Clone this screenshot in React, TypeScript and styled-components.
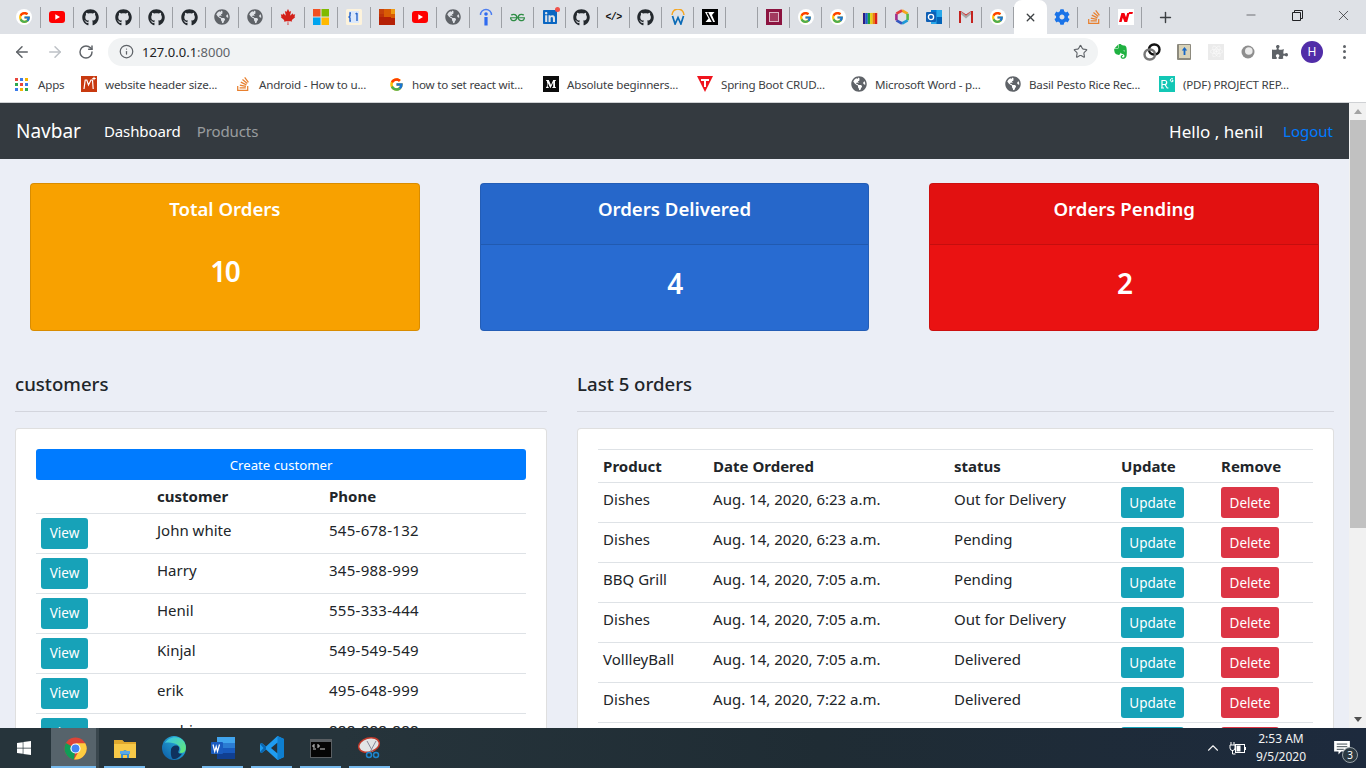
import React from "react";
import styled, { createGlobalStyle } from "styled-components";
import { FcGoogle } from "react-icons/fc";
import {
  FaGithub,
  FaGlobeAmericas,
  FaCanadianMapleLeaf,
  FaLinkedin,
  FaCog,
  FaStackOverflow,
  FaEvernote,
  FaWindows,
  FaPuzzlePiece,
  FaReact,
} from "react-icons/fa";
import { SiGeeksforgeeks } from "react-icons/si";
import { ArrowLeft, ArrowRight, RotateCw, Star, Info, Plus, X, Minus, ChevronUp } from "lucide-react";

const UI = `"Noto Sans", "Open Sans", Arial, sans-serif`;

const Global = createGlobalStyle`
  html, body { margin: 0; padding: 0; height: 100%; overflow: hidden; background: #fff; }
  * { box-sizing: border-box; }
  body { font-family: ${UI}; color: #212529; }
`;

const Shell = styled.div`
  width: 1366px;
  height: 768px;
  display: flex;
  flex-direction: column;
  overflow: hidden;
`;

/* ---------- tab strip ---------- */
const TabStrip = styled.div`
  height: 34px;
  flex: none;
  display: flex;
  align-items: stretch;
  padding-left: 8px;
  background: #dee1e6;
`;
const Tab = styled.div<{ $w?: number }>`
  width: ${(p) => p.$w ?? 33}px;
  flex: none;
  display: flex;
  align-items: center;
  justify-content: center;
  position: relative;
  border-right: 1px solid #9da0a5;
  border-image: linear-gradient(to bottom, transparent 8px, #9da0a5 8px, #9da0a5 27px, transparent 27px) 1;
`;
const LinkedInWrap = styled.span`
  position: relative;
  display: flex;
  &::after {
    content: "";
    position: absolute;
    right: -2px;
    top: -2px;
    width: 5px;
    height: 5px;
    border-radius: 50%;
    background: #f0524a;
  }
`;
const ActiveTab = styled.div`
  width: 33px;
  flex: none;
  background: #fff;
  border-radius: 8px 8px 0 0;
  display: flex;
  align-items: center;
  justify-content: center;
  color: #3c4043;
`;
const GoogleDisc = styled.span`
  width: 16px;
  height: 16px;
  border-radius: 50%;
  background: #fff;
  display: flex;
  align-items: center;
  justify-content: center;
`;
const NewTab = styled.div`
  margin-left: 6px;
  width: 34px;
  display: flex;
  align-items: center;
  justify-content: center;
  color: #3c4043;
`;
const WindowControls = styled.div`
  margin-left: auto;
  display: flex;
  color: #202124;
`;
const WinButton = styled.div`
  width: 46px;
  height: 30px;
  display: flex;
  align-items: center;
  justify-content: center;
`;
const Code = styled.span`
  font: bold 10px "Liberation Mono", monospace;
  color: #111;
  letter-spacing: -0.6px;
`;

/* ---------- toolbar ---------- */
const Toolbar = styled.div`
  height: 35px;
  flex: none;
  background: #fff;
  display: flex;
  align-items: center;
  padding-left: 6px;
`;
const NavIcon = styled.div<{ $w?: number }>`
  width: ${(p) => p.$w ?? 32}px;
  flex: none;
  display: flex;
  align-items: center;
  justify-content: center;
  color: #5f6368;
`;
const Omnibox = styled.div`
  width: 990px;
  height: 28px;
  margin-left: 7px;
  margin-right: 6px;
  flex: none;
  background: #f1f3f4;
  border-radius: 14px;
  display: flex;
  align-items: center;
  padding-left: 11px;
  padding-right: 10px;
  color: #5f6368;
`;
const Url = styled.span`
  margin-left: 8px;
  font-size: 13px;
  color: #202124;
  b { font-weight: 400; color: #5f6368; }
`;
const StarSlot = styled.div`
  margin-left: auto;
  display: flex;
`;
const Avatar = styled.div`
  width: 22px;
  height: 22px;
  border-radius: 50%;
  background: #512da8;
  color: #fff;
  font-size: 12px;
  display: flex;
  align-items: center;
  justify-content: center;
`;
const Dots = styled.div`
  display: flex;
  flex-direction: column;
  gap: 2.5px;
  i { width: 3px; height: 3px; border-radius: 50%; background: #5f6368; display: block; }
`;
const AtomTile = styled.div`
  width: 16px;
  height: 16px;
  background: #ebebeb;
  display: flex;
  align-items: center;
  justify-content: center;
`;

/* ---------- bookmarks ---------- */
const Bookmarks = styled.div`
  height: 34px;
  flex: none;
  background: #fff;
  border-bottom: 1px solid #cfd1d4;
  display: flex;
  align-items: center;
  padding: 0 0 3px 15px;
  font-size: 11.6px;
  color: #3c4043;
`;
const AppsLink = styled.div`
  width: 66px;
  flex: none;
  display: flex;
  align-items: center;
  gap: 10px;
`;
const AppsGrid = styled.div`
  display: grid;
  grid-template-columns: repeat(3, 3px);
  gap: 2px;
  i { width: 3px; height: 3px; display: block; }
`;
const Bookmark = styled.div`
  width: 154px;
  flex: none;
  display: flex;
  align-items: center;
  gap: 8px;
  white-space: nowrap;
`;
const BmLabel = styled.span`
  letter-spacing: -0.2px;
`;

/* ---------- page ---------- */
const Viewport = styled.div`
  flex: 1;
  min-height: 0;
  display: flex;
  overflow: hidden;
`;
const Page = styled.div`
  width: 1349px;
  flex: none;
  background: #ebeef6;
  overflow: hidden;
`;
const Scrollbar = styled.div`
  flex: 1;
  background: #f1f1f1;
  display: flex;
  flex-direction: column;
  align-items: center;
  justify-content: space-between;
  position: relative;
  padding: 6px 0;
`;
const ScrollThumb = styled.div`
  position: absolute;
  left: 1px;
  right: 0;
  top: 17px;
  height: 408px;
  background: #c1c1c1;
`;
const ArrowUp = styled.i`
  width: 0;
  height: 0;
  border-left: 4px solid transparent;
  border-right: 4px solid transparent;
  border-bottom: 5px solid #a3a3a3;
`;
const ArrowDown = styled.i`
  width: 0;
  height: 0;
  border-left: 4px solid transparent;
  border-right: 4px solid transparent;
  border-top: 5px solid #505050;
`;

const Navbar = styled.nav`
  height: 56px;
  background: #343a40;
  display: flex;
  align-items: center;
  padding: 0 16px;
`;
const Brand = styled.span`
  font-size: 19px;
  color: #fff;
  margin-right: 23px;
`;
const NavLink = styled.span<{ $dim?: boolean }>`
  font-size: 15px;
  letter-spacing: -0.1px;
  margin-right: 16px;
  color: ${(p) => (p.$dim ? "rgba(255,255,255,.5)" : "#fff")};
`;
const Hello = styled.span`
  margin-left: auto;
  font-size: 17px;
  color: #fff;
  margin-right: 20px;
`;
const Logout = styled.span`
  font-size: 15px;
  color: #007bff;
`;

const Stats = styled.div`
  display: grid;
  grid-template-columns: repeat(3, 1fr);
  padding-top: 24px;
`;
const StatCol = styled.div`
  padding: 0 30px;
`;
const StatCard = styled.div<{ $bg: string }>`
  height: 148px;
  background: ${(p) => p.$bg};
  border: 1px solid rgba(0, 0, 0, 0.125);
  border-radius: 4px;
  color: #fff;
  text-align: center;
`;
const StatHead = styled.div<{ $rule?: boolean }>`
  height: 61px;
  padding-top: 11px;
  font-size: 18.6px;
  font-weight: 600;
  line-height: 28px;
  ${(p) => p.$rule && "background: rgba(0,0,0,.03); border-bottom: 1px solid rgba(0,0,0,.125);"}
`;
const StatValue = styled.div<{ $offset: number }>`
  padding-top: ${(p) => p.$offset}px;
  font-size: 28px;
  font-weight: 600;
  line-height: 34px;
  letter-spacing: -1.5px;
`;

const Columns = styled.div`
  display: grid;
  grid-template-columns: 5fr 7fr;
  margin-top: 41px;
`;
const Col = styled.section`
  padding: 0 15px;
`;
const Heading = styled.h5`
  margin: 0;
  font-size: 18.6px;
  font-weight: 500;
  line-height: 24px;
`;
const Rule = styled.hr`
  margin: 15px 0 16px;
  border: 0;
  border-top: 1px solid rgba(0, 0, 0, 0.1);
`;
const Panel = styled.div`
  background: #fff;
  border: 1px solid rgba(0, 0, 0, 0.125);
  border-radius: 4px;
  padding: 20px;
`;
const CreateButton = styled.div`
  height: 31px;
  background: #007bff;
  color: #fff;
  font-size: 13.2px;
  border-radius: 3px;
  display: flex;
  align-items: center;
  justify-content: center;
`;
const Table = styled.table`
  width: 100%;
  border-collapse: collapse;
  table-layout: fixed;
  font-size: 15px;
`;
const HeadCell = styled.th<{ $h: number; $top?: boolean }>`
  height: ${(p) => p.$h}px;
  padding: 0 5px;
  text-align: left;
  font-weight: 700;
  font-size: 15px;
  border-bottom: 1px solid #dee2e6;
  ${(p) => p.$top && "border-top: 1px solid #dee2e6;"}
`;
const Cell = styled.td`
  height: 40px;
  padding: 4px 5px 0;
  vertical-align: top;
  line-height: 24px;
  border-bottom: 1px solid #dee2e6;
  white-space: nowrap;
`;
const PhoneCell = styled(Cell)`
  letter-spacing: 0.27px;
`;
const SmallButton = styled.div<{ $bg: string; $w: number }>`
  width: ${(p) => p.$w}px;
  height: 31px;
  background: ${(p) => p.$bg};
  color: #fff;
  border-radius: 3px;
  font-size: 13.5px;
  display: flex;
  align-items: center;
  justify-content: center;
`;

/* ---------- taskbar ---------- */
const Taskbar = styled.div`
  height: 40px;
  flex: none;
  background: linear-gradient(90deg, #26343b 0%, #26343b 25%, #1f2c34 60%, #1d2a3d 100%);
  display: flex;
  align-items: stretch;
  color: #fff;
`;
const StartButton = styled.div`
  width: 51px;
  flex: none;
  display: flex;
  align-items: center;
  justify-content: center;
  padding-right: 3px;
`;
const TaskItem = styled.div<{ $on?: boolean; $active?: boolean }>`
  width: 49px;
  flex: none;
  display: flex;
  align-items: center;
  justify-content: center;
  position: relative;
  background: ${(p) =>
    p.$active ? "linear-gradient(90deg, #56636b 0, #56636b 45px, #39464d 45px, #39464d 48px, transparent 48px)" : "none"};
  &::after {
    content: "";
    position: absolute;
    left: ${(p) => (p.$active ? 0 : 4)}px;
    right: 4px;
    bottom: 0;
    height: 2px;
    background: ${(p) => (p.$on ? "#76b9ed" : "transparent")};
  }
`;
const Tray = styled.div`
  margin-left: auto;
  display: flex;
  align-items: center;
`;
const TrayIcon = styled.div<{ $w: number }>`
  width: ${(p) => p.$w}px;
  display: flex;
  justify-content: center;
`;
const Clock = styled.div`
  width: 64px;
  text-align: center;
  font-size: 12px;
  line-height: 18px;
  color: #f2f2f2;
`;
const Notify = styled.div`
  width: 42px;
  margin-left: 8px;
  margin-right: 3px;
  display: flex;
  justify-content: center;
  position: relative;
`;
const NotifyBadge = styled.span`
  position: absolute;
  left: 21px;
  top: 6px;
  width: 16px;
  height: 16px;
  border-radius: 50%;
  background: #2c3a43;
  border: 1px solid #9aa3a8;
  font-size: 10px;
  display: flex;
  align-items: center;
  justify-content: center;
`;

/* ---------- drawn favicons ---------- */
const YouTube = () => (
  <svg width="16" height="12" viewBox="0 0 16 12"><rect width="16" height="12" rx="3" fill="#f00" /><path d="M6.3 3.2 11 6l-4.7 2.8z" fill="#fff" /></svg>
);
const Microsoft = () => (
  <svg width="16" height="16" viewBox="0 0 16 16"><rect width="7.5" height="7.5" fill="#f25022" /><rect x="8.5" width="7.5" height="7.5" fill="#7fba00" /><rect y="8.5" width="7.5" height="7.5" fill="#00a4ef" /><rect x="8.5" y="8.5" width="7.5" height="7.5" fill="#ffb900" /></svg>
);
const Bracket = () => (
  <svg width="16" height="16" viewBox="0 0 16 16"><rect width="16" height="16" rx="1.5" fill="#fdf3dc" /><rect x="3" y="2" width="10" height="12" fill="#dbe8fb" /><path d="M5 4H4v3L3 8l1 1v3h1M11 4v8M9.5 5 11 4" stroke="#2a66c9" strokeWidth="1.4" fill="none" /></svg>
);
const Mosaic = () => (
  <svg width="16" height="16" viewBox="0 0 16 16"><rect width="16" height="16" fill="#b52106" /><rect width="5" height="5" fill="#c8410b" /><rect x="5" width="7" height="8" fill="#d95c04" /><rect x="12" width="4" height="5" fill="#ee9b13" /><rect x="12" y="5" width="4" height="4" fill="#d95c04" /><rect y="5" width="5" height="3" fill="#bf3309" /></svg>
);
const InfoBlue = () => (
  <svg width="16" height="18" viewBox="0 0 16 18"><path d="M2.5 7a5.5 5.5 0 0 1 11 0" fill="none" stroke="#4d7ef0" strokeWidth="1.4" /><circle cx="8" cy="6" r="1.8" fill="#2f6bf0" /><rect x="6.4" y="9" width="3.2" height="8.5" fill="#2f6bf0" /></svg>
);
const Workday = () => (
  <svg width="16" height="16" viewBox="0 0 16 16"><path d="M2 6a6 6 0 0 1 12 0" fill="none" stroke="#f5a623" strokeWidth="1.5" /><path d="m2.5 7 2.6 8 2.9-6.5 2.9 6.5 2.6-8" fill="none" stroke="#0a6ab6" strokeWidth="1.7" /></svg>
);
const Notion = () => (
  <svg width="16" height="16" viewBox="0 0 16 16"><rect width="16" height="16" fill="#000" /><path d="M3 3h9.5L10 6 13 13H3.5l3-3.5z" fill="#fff" /><path d="M5.5 3.6 10.5 13" stroke="#000" strokeWidth="1.5" /></svg>
);
const Maroon = () => (
  <svg width="16" height="16" viewBox="0 0 16 16"><rect width="16" height="16" fill="#8c1440" /><rect x="3.5" y="3.5" width="9" height="9" fill="#a23a5e" stroke="#dcb4c3" /></svg>
);
const RainbowBook = () => (
  <svg width="16" height="16" viewBox="0 0 16 16"><path d="M0 2 8 4l8-2v13l-8 1-8-1z" fill="#e8e0c8" /><rect x="1" y="4" width="2.4" height="11" fill="#2b1a86" /><rect x="3.4" y="4" width="2.4" height="11" fill="#1a5fd0" /><rect x="5.8" y="4" width="2.4" height="11" fill="#1f9e3c" /><rect x="8.2" y="4" width="2.4" height="11" fill="#e8d010" /><rect x="10.6" y="4" width="2.4" height="11" fill="#ec7a12" /><rect x="13" y="4" width="2.2" height="11" fill="#d91f1f" /></svg>
);
const Hexagon = () => (
  <svg width="16" height="16" viewBox="0 0 16 16" fill="none" strokeWidth="2.6"><path d="M8 1.5 13.6 4.7" stroke="#f4a81c" /><path d="M13.6 4.7v6.6" stroke="#57b947" /><path d="M13.6 11.3 8 14.5" stroke="#1f9ad6" /><path d="M8 14.5 2.4 11.3" stroke="#3457c0" /><path d="M2.4 11.3V4.7" stroke="#a02c8e" /><path d="M2.4 4.7 8 1.5" stroke="#e23d3d" /></svg>
);
const Outlook = () => (
  <svg width="16" height="16" viewBox="0 0 16 16"><rect x="5" y="1" width="11" height="14" fill="#28a8ea" /><rect x="5" y="1" width="5.5" height="7" fill="#0078d4" /><rect x="10.5" y="8" width="5.5" height="7" fill="#0364b8" /><rect y="3" width="10" height="10" rx="1" fill="#0f5fb5" /><circle cx="5" cy="8" r="2.6" fill="none" stroke="#fff" strokeWidth="1.3" /></svg>
);
const Gmail = () => (
  <svg width="16" height="14" viewBox="0 0 16 14"><path d="M3 1.5 8 6l5-4.500V13h2V1h-2L8 4.500 3 1H1v12h2z" fill="#c5221f" /><path d="M3 1.500 8 6l5-4.500v2.800L8 8.400 3 4.300z" fill="#a8a8a8" /></svg>
);
const RedN = () => (
  <svg width="16" height="16" viewBox="0 0 16 16"><rect width="16" height="16" fill="#fff" /><path d="M1 13 3.400 4h3l1.600 4.200L9.200 4h2.400L9.200 13H6.400L4.800 8.800 3.600 13zM11 3h4l-.6 2h-4z" fill="#f4000c" /></svg>
);
const LinkRings = () => (
  <svg width="18" height="18" viewBox="0 0 18 18" fill="none" strokeWidth="2.4"><rect x="6" y="1.500" width="10.500" height="10" rx="5" stroke="#111" /><rect x="1.500" y="6.500" width="10.500" height="10" rx="5" stroke="#777" /></svg>
);
const UpBook = () => (
  <svg width="14" height="16" viewBox="0 0 14 16"><rect width="14" height="16" rx="1" fill="#8d8a7e" /><rect x="2" y="1" width="11" height="13" fill="#d8d2b8" /><path d="M7.500 3 4.800 6.500h1.800V11h1.800V6.500h1.800z" fill="#1666c5" /></svg>
);
const Orb = () => (
  <svg width="14" height="14" viewBox="0 0 14 14"><circle cx="7" cy="7" r="6.500" fill="#8e8e8e" /><circle cx="7.800" cy="6" r="3.800" fill="#ececec" /></svg>
);
const MIcon = () => (
  <svg width="16" height="16" viewBox="0 0 16 16"><rect width="16" height="16" fill="#c8390f" /><path d="M3 13 4.200 4h1.600L7.500 9 10 4h1.500l.7 9" fill="none" stroke="#fff" strokeWidth="1.200" /><path d="M13 .8v3.400M11.300 2.500h3.400" stroke="#fff" /></svg>
);
const MediumIcon = () => (
  <svg width="16" height="16" viewBox="0 0 16 16"><rect width="16" height="16" fill="#0c0c0c" /><path d="M3 4h2.800L8 9l2.200-5H13v.5l-1 .8v5.400l1 .8v.5H9.200v-.5l1-.8V6.500L7.600 12h-.3L4.600 6.500v3.800l1.200 1.200v.5H3v-.5l1-1.200V5.300L3 4.500z" fill="#fff" /></svg>
);
const SpringT = () => (
  <svg width="16" height="16" viewBox="0 0 16 16"><path d="M0 0h16L8 16z" fill="#f0141e" /><path d="M4 3h8v2H9v6H7V5H4z" fill="#fff" /></svg>
);
const ResearchGate = () => (
  <svg width="16" height="16" viewBox="0 0 16 16"><rect width="16" height="16" fill="#13c7b5" /><path d="M3 4v8M2 12h3M3.500 4.500h2.200a2 2 0 0 1 0 4H3.500M6 8.500l2.200 3.500h1.200" fill="none" stroke="#fff" strokeWidth="1.200" /><path d="M14 3a1.600 1.600 0 1 0 0 2.400V4.300h-1.200" fill="none" stroke="#fff" /></svg>
);

/* ---------- taskbar drawings ---------- */
const ChromeLogo = () => (
  <svg width="23" height="23" viewBox="0 0 24 24">
    <circle cx="12" cy="12" r="11.500" fill="#db4437" />
    <path d="M12 12 2 6.200A11.500 11.500 0 0 0 10.500 23.400z" fill="#0f9d58" />
    <path d="M12 6.500h10.200A11.500 11.500 0 0 1 10.500 23.400L17 12z" fill="#ffcd40" />
    <circle cx="12" cy="12" r="5.300" fill="#fff" />
    <circle cx="12" cy="12" r="4.100" fill="#4285f4" />
  </svg>
);
const Folder = () => (
  <svg width="22" height="20" viewBox="0 0 22 20"><path d="M0 2h8l2 2h12v16H0z" fill="#f7c948" /><path d="M0 2h8l2 2h12v2H0z" fill="#e0a92e" /><path d="M7 20v-6l4-2 4 2v6h-2v-3H9v3z" fill="#3a8ed0" /><rect x="6" y="13" width="10" height="3" fill="#5aa9e6" /></svg>
);
const Edge = () => (
  <svg width="24" height="24" viewBox="0 0 24 24">
    <defs>
      <linearGradient id="edgeA" x1="0" y1="1" x2="1" y2="0"><stop offset="0" stopColor="#0c59a4" /><stop offset="1" stopColor="#2fc2e8" /></linearGradient>
      <linearGradient id="edgeB" x1="0" y1="0" x2="1" y2="1"><stop offset="0" stopColor="#35c1f1" /><stop offset="1" stopColor="#66eb6e" /></linearGradient>
    </defs>
    <circle cx="12" cy="12" r="12" fill="url(#edgeA)" />
    <path d="M3 7C6 1 15-1 20.500 4 24 7.200 24.500 12 23 15c-1 2-4 2.500-6 1.500 2-1.500 2-5-.5-7C13 6.500 6 6 3 7z" fill="url(#edgeB)" />
    <path d="M9 14c0-3 3-5 6-4.500 2 .5 3 3 1.500 5.500-1 2 1 3.500 3.500 2.500-2 3.500-6 6-9 5.500-2-1-2.500-6-2-9z" fill="#10325e" />
  </svg>
);
const Word = () => (
  <svg width="24" height="22" viewBox="0 0 24 22"><rect x="6" y="0" width="18" height="6" fill="#41a5ee" /><rect x="6" y="6" width="18" height="5.500" fill="#2b7cd3" /><rect x="6" y="11" width="18" height="5.500" fill="#185abd" /><rect x="6" y="16" width="18" height="6" fill="#103f91" /><rect y="5" width="12" height="12" rx="1" fill="#1a5cc0" /><path d="m2 7.500 1.700 7 1.500-5 1.300 5 2-7" fill="none" stroke="#fff" strokeWidth="1.200" /></svg>
);
const VsCode = () => (
  <svg width="24" height="24" viewBox="0 0 24 24"><path d="M17.500 0 24 3v18l-6.500 3L6 13.500 1.700 17 0 16V8l1.700-1L6 10.500z" fill="#1f9cf0" /><path d="M17.500 6.500 11 12l6.500 5.500z" fill="#26323a" /><path d="M17.500 0 24 3v18l-6.500 3z" fill="#0e7fd0" /><path d="M0 8l1.700-1L6 10.500v3L1.700 17 0 16l3.500-4z" fill="#0a66b0" /></svg>
);
const Terminal = () => (
  <svg width="22" height="19" viewBox="0 0 22 19"><rect width="22" height="19" fill="#5a5f63" /><rect x="1" y="3" width="20" height="15" fill="#050505" /><path d="M3 6h2M3 6v2h2M7 6h2v2H7M3 10h3M10 10h5" stroke="#d0d0d0" fill="none" /></svg>
);
const Snip = () => (
  <svg width="24" height="24" viewBox="0 0 24 24"><ellipse cx="11" cy="9" rx="10.500" ry="7" fill="#e2e4e6" stroke="#c0392b" strokeWidth="1.500" transform="rotate(-15 11 9)" /><path d="M9 5l6 11M18 5l-6 11" stroke="#889" strokeWidth="1" /><circle cx="11" cy="19" r="2.500" fill="none" stroke="#1c86d0" strokeWidth="1.500" /><circle cx="18" cy="19" r="2.500" fill="none" stroke="#1c86d0" strokeWidth="1.500" /></svg>
);
const Plug = () => (
  <svg width="17" height="13" viewBox="0 0 17 13" fill="none" stroke="#fff"><path d="M2 0v3M5 0v3M1 3h5v3a2.500 2.500 0 0 1-5 0zM3.500 8v4h3" /><rect x="6.500" y="2.500" width="9" height="8" /><rect x="7.500" y="3.500" width="4" height="6" fill="#fff" stroke="none" /><path d="M16.500 5v3" /></svg>
);
const Bubble = () => (
  <svg width="16" height="14" viewBox="0 0 18 16"><path d="M0 0h18v12H8l-3 3.500V12H0z" fill="#fff" /><path d="M3 3.500h12M3 6.500h12M3 9.500h8" stroke="#26343b" /></svg>
);

const Sm = <FaGlobeAmericas size={16} color="#5f6368" />;
const G = (
  <GoogleDisc>
    <FcGoogle size={13} />
  </GoogleDisc>
);
const Hub = <FaGithub size={17} color="#24292e" />;

const leftTabs: [React.ReactNode, number][] = [
  [G, 33], [<YouTube />, 33], [Hub, 33], [Hub, 33], [Hub, 33], [Hub, 33], [Sm, 33], [Sm, 33],
  [<FaCanadianMapleLeaf size={16} color="#d3211a" />, 33], [<Microsoft />, 33], [<Bracket />, 33], [<Mosaic />, 33],
  [<YouTube />, 33], [Sm, 33], [<InfoBlue />, 32],
  [<SiGeeksforgeeks size={15} color="#2f8d46" />, 32],
  [<LinkedInWrap><FaLinkedin size={16} color="#0a66c2" /></LinkedInWrap>, 32], [Hub, 32],
  [<Code>&lt;/&gt;</Code>, 32], [Hub, 32], [<Workday />, 32], [<Notion />, 32], [null, 32], [<Maroon />, 32], [G, 32], [G, 32],
  [<RainbowBook />, 32], [<Hexagon />, 32], [<Outlook />, 32], [<Gmail />, 32], [G, 32],
];
const rightTabs: [React.ReactNode, number][] = [
  [<FaCog size={16} color="#1a73e8" />, 31],
  [<FaStackOverflow size={16} color="#e8802f" />, 32],
  [<RedN />, 32],
];

const bookmarks: [React.ReactNode, string][] = [
  [<MIcon />, "website header size..."],
  [<FaStackOverflow size={16} color="#e8802f" />, "Android - How to u..."],
  [<FcGoogle size={15} />, "how to set react wit..."],
  [<MediumIcon />, "Absolute beginners..."],
  [<SpringT />, "Spring Boot CRUD..."],
  [Sm, "Microsoft Word - p..."],
  [Sm, "Basil Pesto Rice Rec..."],
  [<ResearchGate />, "(PDF) PROJECT REP..."],
];

const appDots = ["#e8453c", "#3a7bea", "#f5b400", "#2da94f", "#e8453c", "#3a7bea", "#3a7bea", "#f5b400", "#2da94f"];

const customers = [
  ["John white", "545-678-132"],
  ["Harry", "345-988-999"],
  ["Henil", "555-333-444"],
  ["Kinjal", "549-549-549"],
  ["erik", "495-648-999"],
  ["sachin", "888-888-888"],
];

const orders = [
  ["Dishes", "Aug. 14, 2020, 6:23 a.m.", "Out for Delivery"],
  ["Dishes", "Aug. 14, 2020, 6:23 a.m.", "Pending"],
  ["BBQ Grill", "Aug. 14, 2020, 7:05 a.m.", "Pending"],
  ["Dishes", "Aug. 14, 2020, 7:05 a.m.", "Out for Delivery"],
  ["VollleyBall", "Aug. 14, 2020, 7:05 a.m.", "Delivered"],
  ["Dishes", "Aug. 14, 2020, 7:22 a.m.", "Delivered"],
  ["Dishes", "Aug. 14, 2020, 7:22 a.m.", "Pending"],
];

export default function App() {
  return (
    <Shell>
      <Global />
      <TabStrip>
        {leftTabs.map(([icon, w], i) => (
          <Tab key={i} $w={w}>{icon}</Tab>
        ))}
        <ActiveTab><X size={13} strokeWidth={2.5} /></ActiveTab>
        {rightTabs.map(([icon, w], i) => (
          <Tab key={i} $w={w}>{icon}</Tab>
        ))}
        <NewTab><Plus size={17} strokeWidth={2} /></NewTab>
        <WindowControls>
          <WinButton><Minus size={14} strokeWidth={1} /></WinButton>
          <WinButton>
            <svg width="11" height="11" viewBox="0 0 11 11" fill="none" stroke="#202124"><path d="M.5 2.500h8v8h-8zM2.500 2.500v-2h8v8h-2" /></svg>
          </WinButton>
          <WinButton><X size={17} strokeWidth={1} /></WinButton>
        </WindowControls>
      </TabStrip>

      <Toolbar>
        <NavIcon><ArrowLeft size={18} strokeWidth={2} /></NavIcon>
        <NavIcon $w={33}><ArrowRight size={18} strokeWidth={2} color="#bdc1c6" /></NavIcon>
        <NavIcon $w={30}><RotateCw size={16} strokeWidth={2.2} /></NavIcon>
        <Omnibox>
          <Info size={15} strokeWidth={2} />
          <Url>127.0.0.1<b>:8000</b></Url>
          <StarSlot><Star size={15} strokeWidth={1.8} /></StarSlot>
        </Omnibox>
        <NavIcon><FaEvernote size={17} color="#1fb141" /></NavIcon>
        <NavIcon><LinkRings /></NavIcon>
        <NavIcon><UpBook /></NavIcon>
        <NavIcon>
          <AtomTile><FaReact size={13} color="#fafafa" /></AtomTile>
        </NavIcon>
        <NavIcon><Orb /></NavIcon>
        <NavIcon><FaPuzzlePiece size={16} color="#5f6368" /></NavIcon>
        <NavIcon><Avatar>H</Avatar></NavIcon>
        <NavIcon><Dots><i /><i /><i /></Dots></NavIcon>
      </Toolbar>

      <Bookmarks>
        <AppsLink>
          <AppsGrid>{appDots.map((c, i) => <i key={i} style={{ background: c }} />)}</AppsGrid>
          <BmLabel>Apps</BmLabel>
        </AppsLink>
        {bookmarks.map(([icon, label]) => (
          <Bookmark key={label}>
            {icon}
            <BmLabel>{label}</BmLabel>
          </Bookmark>
        ))}
      </Bookmarks>

      <Viewport>
        <Page>
          <Navbar>
            <Brand>Navbar</Brand>
            <NavLink>Dashboard</NavLink>
            <NavLink $dim>Products</NavLink>
            <Hello>Hello , henil</Hello>
            <Logout>Logout</Logout>
          </Navbar>

          <Stats>
            <StatCol>
              <StatCard $bg="#f8a100">
                <StatHead>Total Orders</StatHead>
                <StatValue $offset={9}>10</StatValue>
              </StatCard>
            </StatCol>
            <StatCol>
              <StatCard $bg="#286bd1">
                <StatHead $rule>Orders Delivered</StatHead>
                <StatValue $offset={21}>4</StatValue>
              </StatCard>
            </StatCol>
            <StatCol>
              <StatCard $bg="#ea1212">
                <StatHead $rule>Orders Pending</StatHead>
                <StatValue $offset={21}>2</StatValue>
              </StatCard>
            </StatCol>
          </Stats>

          <Columns>
            <Col>
              <Heading>customers</Heading>
              <Rule />
              <Panel>
                <CreateButton>Create customer</CreateButton>
                <Table>
                  <colgroup>
                    <col width="116" />
                    <col width="172" />
                    <col />
                  </colgroup>
                  <thead>
                    <tr>
                      <HeadCell $h={33} />
                      <HeadCell $h={33}>customer</HeadCell>
                      <HeadCell $h={33}>Phone</HeadCell>
                    </tr>
                  </thead>
                  <tbody>
                    {customers.map(([name, phone]) => (
                      <tr key={name}>
                        <Cell><SmallButton $bg="#17a2b8" $w={47}>View</SmallButton></Cell>
                        <Cell>{name}</Cell>
                        <PhoneCell>{phone}</PhoneCell>
                      </tr>
                    ))}
                  </tbody>
                </Table>
              </Panel>
            </Col>
            <Col>
              <Heading>Last 5 orders</Heading>
              <Rule />
              <Panel>
                <Table>
                  <colgroup>
                    <col width="110" />
                    <col width="241" />
                    <col width="167" />
                    <col width="100" />
                    <col />
                  </colgroup>
                  <thead>
                    <tr>
                      <HeadCell $h={33} $top>Product</HeadCell>
                      <HeadCell $h={33} $top>Date Ordered</HeadCell>
                      <HeadCell $h={33} $top>status</HeadCell>
                      <HeadCell $h={33} $top>Update</HeadCell>
                      <HeadCell $h={33} $top>Remove</HeadCell>
                    </tr>
                  </thead>
                  <tbody>
                    {orders.map(([product, date, status], i) => (
                      <tr key={i}>
                        <Cell>{product}</Cell>
                        <Cell>{date}</Cell>
                        <Cell>{status}</Cell>
                        <Cell><SmallButton $bg="#17a2b8" $w={63}>Update</SmallButton></Cell>
                        <Cell><SmallButton $bg="#dc3545" $w={58}>Delete</SmallButton></Cell>
                      </tr>
                    ))}
                  </tbody>
                </Table>
              </Panel>
            </Col>
          </Columns>
        </Page>
        <Scrollbar>
          <ArrowUp />
          <ScrollThumb />
          <ArrowDown />
        </Scrollbar>
      </Viewport>

      <Taskbar>
        <StartButton><FaWindows size={16} color="#fff" /></StartButton>
        <TaskItem $active $on><ChromeLogo /></TaskItem>
        <TaskItem $on><Folder /></TaskItem>
        <TaskItem><Edge /></TaskItem>
        <TaskItem $on><Word /></TaskItem>
        <TaskItem $on><VsCode /></TaskItem>
        <TaskItem $on><Terminal /></TaskItem>
        <TaskItem $on><Snip /></TaskItem>
        <Tray>
          <TrayIcon $w={24}><ChevronUp size={18} strokeWidth={1.5} color="#f2f2f2" /></TrayIcon>
          <TrayIcon $w={24}><Plug /></TrayIcon>
          <Clock>2:53 AM<br />9/5/2020</Clock>
          <Notify>
            <Bubble />
            <NotifyBadge>3</NotifyBadge>
          </Notify>
        </Tray>
      </Taskbar>
    </Shell>
  );
}
